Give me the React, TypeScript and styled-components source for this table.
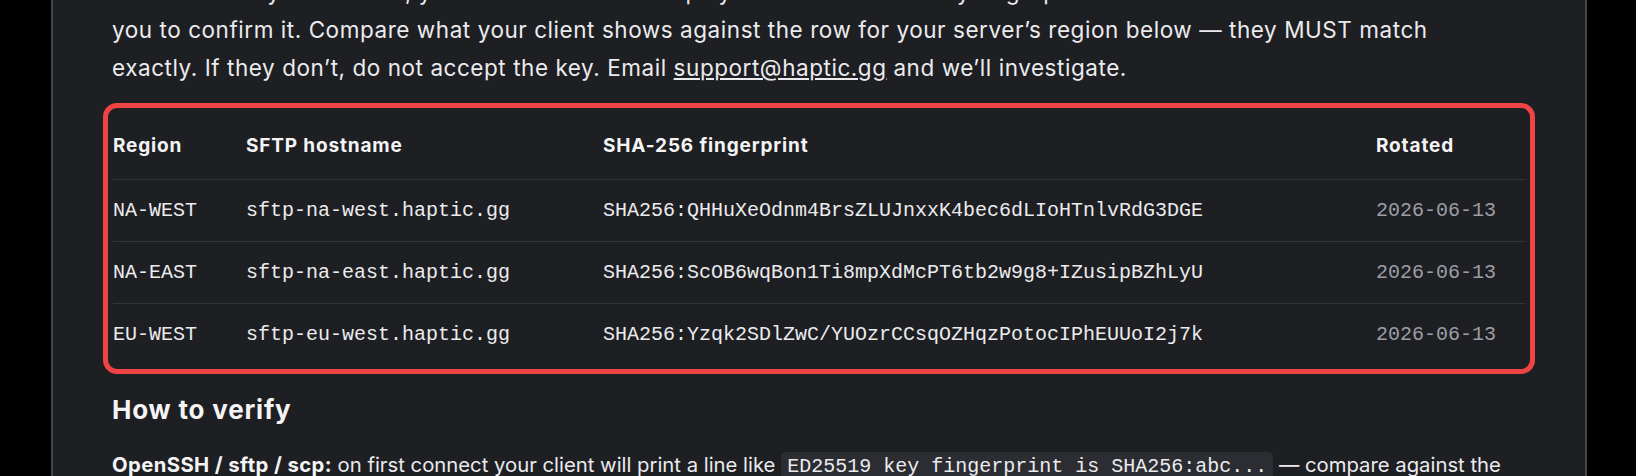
import React from "react";
import styled, { createGlobalStyle } from "styled-components";

const GlobalStyle = createGlobalStyle`
  html, body {
    margin: 0;
    padding: 0;
    background: #000000;
  }
  body {
    font-family: Inter, "Noto Sans", sans-serif;
    overflow: hidden;
    height: 476px;
  }
`;

const Page = styled.div`
  display: flex;
  height: 476px;
  padding: 0 49px 0 51px;
  overflow: hidden;
`;

const Panel = styled.main`
  flex: 1;
  margin-top: -27px;
  padding: 0 59px;
  background: #1e1f23;
  border-left: 2px solid #42454a;
  border-right: 2px solid #42454a;
`;

const Prose = styled.p<{ $lead?: boolean; $gap?: number }>`
  margin: ${(p) => p.$gap ?? 0}px 0 0;
  font-size: ${(p) => (p.$lead ? "22.5px" : "20.3px")};
  letter-spacing: ${(p) => (p.$lead ? "0.55px" : "0")};
  line-height: 38px;
  color: #ebebee;
`;

const Strong = styled.strong`
  font-weight: 700;
  letter-spacing: 0.4px;
  color: #f4f4f5;
`;

const MailLink = styled.a`
  color: inherit;
  text-decoration: underline;
  text-underline-offset: 2px;
  text-decoration-thickness: 1.5px;
  text-decoration-skip-ink: auto;
`;

const Frame = styled.div`
  margin: 16px -9px 0;
  padding: 5px 5px 4px;
  border: 5px solid #ef4444;
  border-radius: 14px;
`;

const Table = styled.table`
  width: 100%;
  border-collapse: collapse;
  table-layout: fixed;
`;

const Col = styled.col<{ $w?: number }>`
  width: ${(p) => (p.$w ? `${p.$w}px` : "auto")};
`;

const HeadCell = styled.th`
  padding: 22px 0;
  text-align: left;
  font-size: 19px;
  letter-spacing: 0.85px;
  line-height: 22px;
  font-weight: 700;
  color: #f4f4f5;
  border-bottom: 1px solid #33353a;
`;

const BodyRow = styled.tr`
  &:last-child td {
    border-bottom: none;
  }
`;

const Cell = styled.td<{ $muted?: boolean }>`
  padding: 18px 0;
  font-family: "Liberation Mono", monospace;
  font-size: 20px;
  line-height: 25px;
  white-space: nowrap;
  color: ${(p) => (p.$muted ? "#9b9ea4" : "#ebebee")};
  border-bottom: 1px solid #33353a;
`;

const Heading = styled.h2`
  margin: 19px 0 0;
  font-size: 26px;
  letter-spacing: 0.8px;
  line-height: 34px;
  font-weight: 700;
  color: #f4f4f5;
`;

const Code = styled.code`
  padding: 3px 6px;
  font-family: "Liberation Mono", monospace;
  font-size: 20px;
  letter-spacing: 0;
  color: #ebebee;
  background: #2b2d32;
  border-radius: 5px;
`;

type KeyRow = { region: string; host: string; fp: string; rotated: string };

const rows: KeyRow[] = [
  {
    region: "NA-WEST",
    host: "sftp-na-west.haptic.gg",
    fp: "SHA256:QHHuXeOdnm4BrsZLUJnxxK4bec6dLIoHTnlvRdG3DGE",
    rotated: "2026-06-13",
  },
  {
    region: "NA-EAST",
    host: "sftp-na-east.haptic.gg",
    fp: "SHA256:ScOB6wqBon1Ti8mpXdMcPT6tb2w9g8+IZusipBZhLyU",
    rotated: "2026-06-13",
  },
  {
    region: "EU-WEST",
    host: "sftp-eu-west.haptic.gg",
    fp: "SHA256:Yzqk2SDlZwC/YUOzrCCsqOZHqzPotocIPhEUUoI2j7k",
    rotated: "2026-06-13",
  },
];

export default function App() {
  return (
    <>
      <GlobalStyle />
      <Page>
        <Panel>
          <Prose $lead>
            The first time you connect, your SFTP client will display the server’s host key fingerprint and ask
            <br />
            you to confirm it. Compare what your client shows against the row for your server’s region below — they MUST match
            <br />
            exactly. If they don’t, do not accept the key. Email <MailLink href="#">support@haptic.gg</MailLink> and we’ll investigate.
          </Prose>

          <Frame>
            <Table>
              <colgroup>
                <Col $w={133} />
                <Col $w={357} />
                <Col $w={773} />
                <Col />
              </colgroup>
              <thead>
                <tr>
                  <HeadCell>Region</HeadCell>
                  <HeadCell>SFTP hostname</HeadCell>
                  <HeadCell>SHA-256 fingerprint</HeadCell>
                  <HeadCell>Rotated</HeadCell>
                </tr>
              </thead>
              <tbody>
                {rows.map((r) => (
                  <BodyRow key={r.region}>
                    <Cell>{r.region}</Cell>
                    <Cell>{r.host}</Cell>
                    <Cell>{r.fp}</Cell>
                    <Cell $muted>{r.rotated}</Cell>
                  </BodyRow>
                ))}
              </tbody>
            </Table>
          </Frame>

          <Heading>How to verify</Heading>
          <Prose $gap={19}>
            <Strong>OpenSSH / sftp / scp:</Strong> on first connect your client will print a line like{" "}
            <Code>ED25519 key fingerprint is SHA256:abc...</Code> — compare against the fingerprint in the row for your region above.
          </Prose>
        </Panel>
      </Page>
    </>
  );
}
